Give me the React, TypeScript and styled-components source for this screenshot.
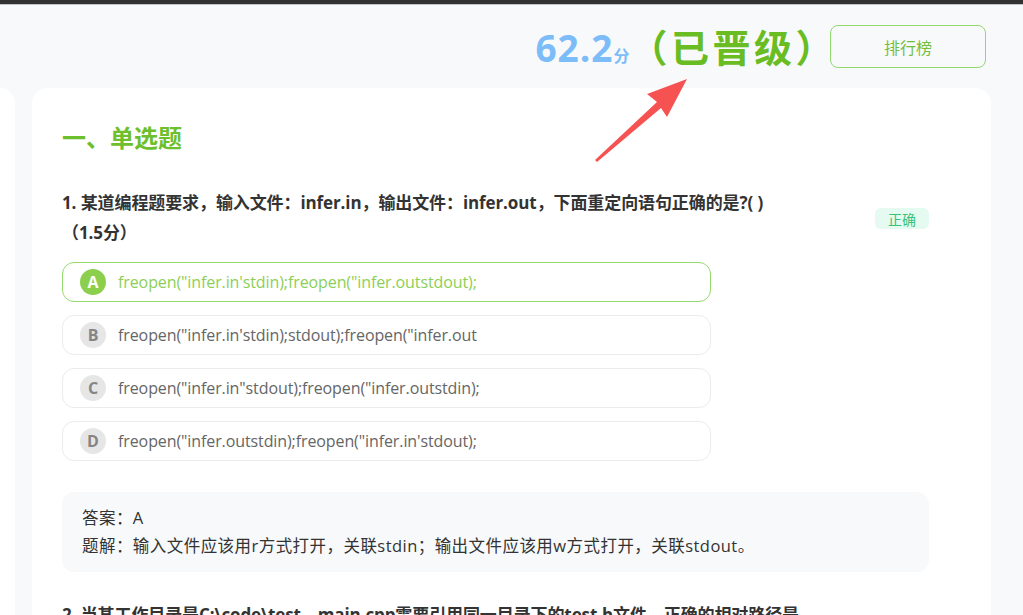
import React from "react";
import styled, { createGlobalStyle } from "styled-components";

const GlobalStyle = createGlobalStyle`
  html, body {
    margin: 0;
    padding: 0;
    background: #f8f9fb;
    font-family: "Open Sans", "Noto Sans CJK SC", sans-serif;
    overflow: hidden;
  }
`;

const Page = styled.div`
  width: 1023px;
  height: 615px;
  position: relative;
  overflow: hidden;
  background: #f8f9fb;
`;

const TopBar = styled.div`
  height: 4px;
  background: #323232;
  border-bottom: 1px solid #c4c4c4;
`;

const Header = styled.div`
  height: 83px;
  display: flex;
  align-items: center;
  justify-content: flex-end;
  gap: 10px;
  padding-right: 37px;
  box-sizing: border-box;
`;

const ScoreGroup = styled.div`
  display: flex;
  align-items: baseline;
  margin-top: -2px;
`;

const Score = styled.span`
  font-size: 37px;
  font-weight: 700;
  color: #7cbcf8;
  letter-spacing: 1px;
`;

const ScoreUnit = styled.span`
  font-size: 16px;
  font-weight: 700;
  color: #7cbcf8;
`;

const Status = styled.span`
  font-family: "Noto Sans CJK SC", sans-serif;
  font-size: 38px;
  font-weight: 700;
  color: #69bc22;
  letter-spacing: 3.5px;
  margin-left: 0;
  margin-right: -17px;
`;

const RankButton = styled.button`
  width: 156px;
  height: 43px;
  border: 1px solid #93d86e;
  border-radius: 8px;
  background: transparent;
  color: #72bf3c;
  font-family: "Noto Sans CJK SC", sans-serif;
  font-size: 16px;
`;

const Body = styled.div`
  display: flex;
  gap: 17px;
`;

const SideCard = styled.div`
  width: 15px;
  height: 540px;
  background: #ffffff;
  border-top-right-radius: 16px;
`;

const MainCard = styled.div`
  width: 959px;
  height: 560px;
  background: #ffffff;
  border-radius: 16px 16px 0 0;
  padding: 30px 30px 0 30px;
  box-sizing: border-box;
`;

const SectionTitle = styled.h2`
  margin: 0;
  font-family: "Noto Sans CJK SC", sans-serif;
  font-size: 24px;
  font-weight: 700;
  color: #6dbf2c;
  line-height: 38px;
`;

const QuestionRow = styled.div`
  width: 867px;
  display: flex;
  justify-content: space-between;
  align-items: flex-start;
  margin-top: 32px;
`;

const QuestionText = styled.div`
  width: 760px;
  font-size: 17px;
  letter-spacing: -0.1px;
  font-weight: 700;
  color: #333333;
  line-height: 30px;
`;

const Points = styled.span`
  white-space: nowrap;
`;

const Badge = styled.span<{ $ok?: boolean }>`
  flex-shrink: 0;
  margin-top: 20px;
  width: 54px;
  height: 21px;
  border-radius: 6px;
  background: ${(p) => (p.$ok ? "#e5faf0" : "#fdecec")};
  color: ${(p) => (p.$ok ? "#39c27c" : "#e35555")};
  font-family: "Noto Sans CJK SC", sans-serif;
  font-size: 14px;
  display: flex;
  align-items: center;
  justify-content: center;
`;

const Options = styled.div`
  display: flex;
  flex-direction: column;
  gap: 13px;
  margin-top: 14px;
`;

const Option = styled.div<{ $active?: boolean }>`
  width: 649px;
  height: 40px;
  box-sizing: border-box;
  border: 1px solid ${(p) => (p.$active ? "#95d96d" : "#ebebeb")};
  border-radius: 12px;
  display: flex;
  align-items: center;
  padding-left: 17px;
  gap: 12px;
`;

const Letter = styled.span<{ $active?: boolean }>`
  width: 26px;
  height: 26px;
  border-radius: 50%;
  background: ${(p) => (p.$active ? "#8ccf4d" : "#e6e6e6")};
  color: ${(p) => (p.$active ? "#ffffff" : "#858585")};
  font-size: 16px;
  font-weight: 700;
  display: flex;
  align-items: center;
  justify-content: center;
`;

const OptionText = styled.span<{ $active?: boolean }>`
  font-size: 16px;
  color: ${(p) => (p.$active ? "#8ccf58" : "#666666")};
  letter-spacing: -0.1px;
`;

const AnswerBox = styled.div`
  width: 867px;
  margin-top: 31px;
  background: #f8f9fb;
  border-radius: 12px;
  padding: 12px 20px;
  box-sizing: border-box;
  line-height: 28px;
  color: #333333;
`;

const AnswerLine = styled.div`
  font-size: 16.5px;
  letter-spacing: 0.45px;
`;

const NextQuestion = styled(QuestionText)`
  width: 900px;
  margin-top: 28px;
  white-space: nowrap;
`;

const Arrow = styled.svg`
  position: absolute;
  left: 0;
  top: 0;
  pointer-events: none;
`;

const options = [
  { key: "A", text: 'freopen("infer.in\'stdin);freopen("infer.outstdout);' },
  { key: "B", text: 'freopen("infer.in\'stdin);stdout);freopen("infer.out' },
  { key: "C", text: 'freopen("infer.in"stdout);freopen("infer.outstdin);' },
  { key: "D", text: 'freopen("infer.outstdin);freopen("infer.in\'stdout);' },
];

export default function App() {
  const answer = "A";
  return (
    <Page>
      <GlobalStyle />
      <TopBar />
      <Header>
        <ScoreGroup>
          <Score>62.2</Score>
          <ScoreUnit>分</ScoreUnit>
          <Status>（已晋级）</Status>
        </ScoreGroup>
        <RankButton>排行榜</RankButton>
      </Header>
      <Body>
        <SideCard />
        <MainCard>
          <SectionTitle>一、单选题</SectionTitle>
          <QuestionRow>
            <QuestionText>
              1. 某道编程题要求，输入文件：infer.in，输出文件：infer.out，下面重定向语句正确的是?( )
              <Points>（1.5分）</Points>
            </QuestionText>
            <Badge $ok>正确</Badge>
          </QuestionRow>
          <Options>
            {options.map((o) => (
              <Option key={o.key} $active={o.key === answer}>
                <Letter $active={o.key === answer}>{o.key}</Letter>
                <OptionText $active={o.key === answer}>{o.text}</OptionText>
              </Option>
            ))}
          </Options>
          <AnswerBox>
            <AnswerLine>答案：A</AnswerLine>
            <AnswerLine>题解：输入文件应该用r方式打开，关联stdin；输出文件应该用w方式打开，关联stdout。</AnswerLine>
          </AnswerBox>
          <NextQuestion>
            2. 当某工作目录是C:\code\test，main.cpp需要引用同一目录下的test.h文件，正确的相对路径是
          </NextQuestion>
        </MainCard>
      </Body>
      <Arrow width="1023" height="615" viewBox="0 0 1023 615">
        <polygon
          points="595,160 657,102 647,94 687,79 667,117 661,108 597,162"
          fill="#f75252"
        />
      </Arrow>
    </Page>
  );
}
